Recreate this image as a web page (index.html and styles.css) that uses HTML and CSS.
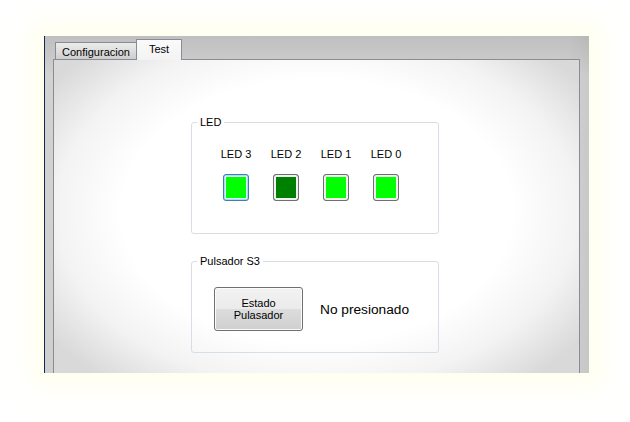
FILE: index.html
```html
<!DOCTYPE html>
<html lang="es">
<head>
<meta charset="utf-8">
<title>Test</title>
<link rel="stylesheet" href="styles.css">
</head>
<body>
<div class="stage">
  <div class="window">
    <div class="tabs">
      <div class="tab">Configuracion</div>
      <div class="tab active">Test</div>
    </div>
    <div class="panel">
      <fieldset class="group">
        <legend>LED</legend>
        <div class="leds">
          <span class="led-label">LED 3</span>
          <span class="led-label">LED 2</span>
          <span class="led-label">LED 1</span>
          <span class="led-label">LED 0</span>
          <span class="led on focus"></span>
          <span class="led dark"></span>
          <span class="led on"></span>
          <span class="led on"></span>
        </div>
      </fieldset>
      <fieldset class="group">
        <legend>Pulsador S3</legend>
        <div class="pulsador">
          <button class="btn" type="button">Estado<br>Pulasador</button>
          <span class="estado">No presionado</span>
        </div>
      </fieldset>
    </div>
  </div>
</div>
</body>
</html>
```
FILE: styles.css
```css
html, body {
  margin: 0;
  padding: 0;
  background: #ffffff;
}
body {
  width: 630px;
  height: 422px;
  overflow: hidden;
  font-family: "Liberation Sans", Arial, sans-serif;
  font-size: 11px;
  color: #000;
}
.stage {
  padding: 36px 0 0 44px;
}
.window {
  width: 545px;
  height: 337px;
  box-sizing: border-box;
  border-left: 1px solid #13294f;
  background:
    linear-gradient(90deg, rgba(0,0,0,0) 96%, rgba(0,0,0,0.04) 100%),
    linear-gradient(#bfbfbf, #d2d2d2 40px, #cfcfcf 100%);
  box-shadow: 0 0 22px 14px rgba(255, 255, 225, 0.55);
  overflow: hidden;
  padding: 3px 9px 0 8px;
  display: flex;
  flex-direction: column;
}
.tabs {
  display: flex;
  align-items: flex-end;
  height: 20px;
  padding-left: 2px;
  position: relative;
  z-index: 1;
}
.tab {
  box-sizing: border-box;
  height: 17px;
  width: 82px;
  border: 1px solid #898c95;
  border-bottom: none;
  background: linear-gradient(#ebebeb, #dedede 50%, #cdcdcd);
  text-align: center;
  line-height: 19px;
}
.tab.active {
  width: 46px;
  height: 21px;
  margin-left: -1px;
  margin-bottom: -1px;
  background: linear-gradient(#fafafa, #f3f3f3);
  line-height: 18px;
}
.panel {
  flex: 1;
  margin-bottom: -3px;
  border: 1px solid #898c95;
  background: radial-gradient(ellipse 62% 70% at 50% 48%, #ffffff 60%, #f3f3f3 80%, #d9d9d9 100%);
  display: flex;
  flex-direction: column;
  gap: 21px;
  padding: 56px 0 0 137px;
}
.group {
  margin: 0;
  padding: 0;
  width: 248px;
  box-sizing: border-box;
  min-width: 0;
  border: 1px solid #d5dfe5;
  border-radius: 3px;
}
.group legend {
  margin-left: 5px;
  padding: 0 3px;
  font-size: 11px;
  line-height: 13px;
}
.leds {
  display: grid;
  grid-template-columns: repeat(4, 50px);
  grid-template-rows: 13px 27px;
  row-gap: 13px;
  justify-items: center;
  padding: 19px 0 32px 19px;
}
.led-label {
  line-height: 13px;
  white-space: nowrap;
}
.led {
  width: 26px;
  height: 27px;
  box-sizing: border-box;
  border: 1px solid #707070;
  border-radius: 3px;
  box-shadow: inset 0 0 0 2px #f2f2f2;
}
.led.on {
  background: #00ff00;
}
.led.dark {
  background: #008000;
}
.led.focus {
  border-color: #3c7fb1;
  box-shadow: inset 0 0 0 1px #a9dcf6, inset 0 0 0 2px #e3f3fb;
}
.pulsador {
  display: flex;
  align-items: center;
  gap: 17px;
  padding: 19px 0 21px 22px;
}
.btn {
  width: 89px;
  height: 44px;
  box-sizing: border-box;
  border: 1px solid #707070;
  border-radius: 3px;
  background: linear-gradient(#f2f2f2 0%, #ebebeb 50%, #dddddd 50%, #cfcfcf 100%);
  box-shadow: inset 0 0 0 1px #fbfbfb;
  font-family: "Liberation Sans", Arial, sans-serif;
  font-size: 11px;
  line-height: 12px;
  color: #000;
  padding: 0;
}
.estado {
  font-size: 13.7px;
}
```
